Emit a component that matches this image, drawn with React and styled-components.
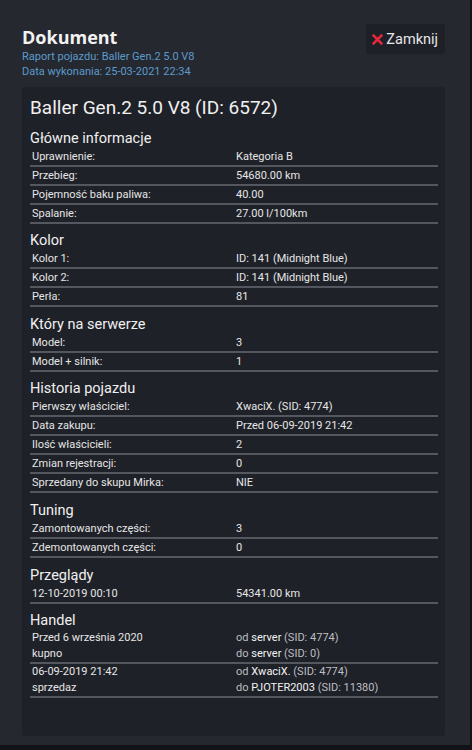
import React from "react";
import styled, { createGlobalStyle } from "styled-components";

const GlobalStyle = createGlobalStyle`
  html, body {
    margin: 0;
    padding: 0;
    background: #121318;
    font-family: Roboto, "Open Sans", sans-serif;
  }
`;

const sections = [
  {
    title: "Główne informacje",
    rows: [
      ["Uprawnienie:", "Kategoria B"],
      ["Przebieg:", "54680.00 km"],
      ["Pojemność baku paliwa:", "40.00"],
      ["Spalanie:", "27.00 l/100km"],
    ],
  },
  {
    title: "Kolor",
    rows: [
      ["Kolor 1:", "ID: 141 (Midnight Blue)"],
      ["Kolor 2:", "ID: 141 (Midnight Blue)"],
      ["Perła:", "81"],
    ],
  },
  {
    title: "Który na serwerze",
    rows: [
      ["Model:", "3"],
      ["Model + silnik:", "1"],
    ],
  },
  {
    title: "Historia pojazdu",
    rows: [
      ["Pierwszy właściciel:", "XwaciX. (SID: 4774)"],
      ["Data zakupu:", "Przed 06-09-2019 21:42"],
      ["Ilość właścicieli:", "2"],
      ["Zmian rejestracji:", "0"],
      ["Sprzedany do skupu Mirka:", "NIE"],
    ],
  },
  {
    title: "Tuning",
    rows: [
      ["Zamontowanych części:", "3"],
      ["Zdemontowanych części:", "0"],
    ],
  },
  {
    title: "Przeglądy",
    rows: [["12-10-2019 00:10", "54341.00 km"]],
  },
];

const trades = [
  {
    date: "Przed 6 września 2020",
    type: "kupno",
    from: ["server", "4774"],
    to: ["server", "0"],
  },
  {
    date: "06-09-2019 21:42",
    type: "sprzedaz",
    from: ["XwaciX.", "4774"],
    to: ["PJOTER2003", "11380"],
  },
];

export default function App() {
  return (
    <>
      <GlobalStyle />
      <Panel>
        <Header>
          <div>
            <Title>Dokument</Title>
            <Sub>Raport pojazdu: Baller Gen.2 5.0 V8</Sub>
            <Sub>Data wykonania: 25-03-2021 22:34</Sub>
          </div>
          <CloseButton>
            <svg width="11" height="11" viewBox="0 0 10 10">
              <path d="M1.5 1.5 L8.5 8.5 M8.5 1.5 L1.5 8.5" stroke="#e8283a" strokeWidth="2.4" strokeLinecap="square" />
            </svg>
            Zamknij
          </CloseButton>
        </Header>
        <Card>
          <CarName>Baller Gen.2 5.0 V8 (ID: 6572)</CarName>
          {sections.map((s) => (
            <Section key={s.title}>
              <Heading>{s.title}</Heading>
              {s.rows.map(([label, value]) => (
                <Row key={label}>
                  <span>{label}</span>
                  <span>{value}</span>
                </Row>
              ))}
            </Section>
          ))}
          <Section>
            <Heading>Handel</Heading>
            {trades.map((t) => (
              <Row key={t.date} $double>
                <div>
                  <div>{t.date}</div>
                  <div>{t.type}</div>
                </div>
                <div>
                  <Muted>
                    od <Name>{t.from[0]}</Name> (SID: {t.from[1]})
                  </Muted>
                  <Muted>
                    do <Name>{t.to[0]}</Name> (SID: {t.to[1]})
                  </Muted>
                </div>
              </Row>
            ))}
          </Section>
        </Card>
      </Panel>
    </>
  );
}

const Panel = styled.div`
  width: 470px;
  height: 745px;
  box-sizing: border-box;
  background: #262830;
  padding: 24px 25px 0 22px;
  display: flex;
  flex-direction: column;
`;

const Header = styled.div`
  display: flex;
  justify-content: space-between;
  align-items: flex-start;
  height: 63px;
`;

const Title = styled.h1`
  margin: 0;
  font-family: "Open Sans", sans-serif;
  font-size: 18px;
  font-weight: 700;
  line-height: 26px;
  color: #f2f2f2;
`;

const Sub = styled.div`
  font-size: 11px;
  line-height: 14.5px;
  color: #5b9bcb;
`;

const CloseButton = styled.div`
  display: flex;
  align-items: center;
  gap: 3px;
  height: 30px;
  padding: 0 7px 0 6px;
  border-radius: 3px;
  background: #1e2027;
  color: #e6e6e6;
  font-size: 14.5px;
`;

const Card = styled.div`
  background: #1f2128;
  border-radius: 3px;
  padding: 7px 7px 38px 8px;
`;

const CarName = styled.div`
  font-size: 19px;
  line-height: 27px;
  color: #f0f0f0;
`;

const Section = styled.div`
  display: flex;
  flex-direction: column;
`;

const Heading = styled.div`
  margin-top: 8.6px;
  font-size: 14.5px;
  line-height: 18px;
  color: #f0f0f0;
`;

const Row = styled.div`
  display: grid;
  grid-template-columns: 204px 1fr;
  padding-left: 2px;
  min-height: ${(p) => (p.$double ? "32px" : "17px")};
  line-height: ${(p) => (p.$double ? "16px" : "17px")};
  font-size: 11px;
  color: #e6e6e6;
  border-bottom: 2px solid #55575e;
`;

const Muted = styled.div`
  color: #bdbec2;
`;

const Name = styled.span`
  color: #f2f2f2;
`;
